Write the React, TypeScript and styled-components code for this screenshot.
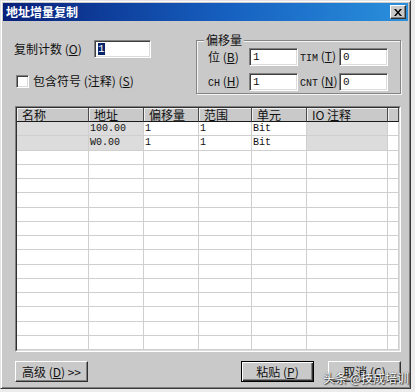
import styled, { createGlobalStyle } from "styled-components";

const GlobalStyle = createGlobalStyle`
  body {
    margin: 0;
    background: #ececec;
    font-family: "Noto Sans CJK SC", "Liberation Sans", sans-serif;
    font-size: 12px;
    color: #111;
  }
`;

const FACE = "#c9c9c9";

const Window = styled.div`
  position: relative;
  box-sizing: border-box;
  width: 411px;
  height: 389px;
  padding: 2px;
  background: ${FACE};
  border: 1px solid;
  border-color: #e4e4e4 #3a3a3a #3a3a3a #e4e4e4;
  box-shadow: inset 1px 1px #fff, inset -1px -1px #808080;
  display: flex;
  flex-direction: column;
`;

const TitleBar = styled.div`
  height: 18px;
  display: flex;
  align-items: center;
  justify-content: space-between;
  padding: 0 2px 0 3px;
  background: linear-gradient(90deg, #08207a 0%, #1660c0 55%, #2a90dc 100%);
  color: #fff;
  font-weight: bold;
  line-height: 14px;
`;

const CloseBtn = styled.div`
  box-sizing: border-box;
  width: 16px;
  height: 14px;
  background: ${FACE};
  border: 1px solid;
  border-color: #fff #303030 #303030 #fff;
  box-shadow: inset -1px -1px #808080;
  display: flex;
  align-items: center;
  justify-content: center;
`;

const Top = styled.div`
  display: flex;
  align-items: flex-start;
  padding: 12px 7px 0 11px;
`;

const LeftBlock = styled.div`
  padding-top: 7px;
`;

const CountRow = styled.div`
  display: flex;
  align-items: center;
  height: 18px;
`;

const Label = styled.span<{ $w?: number; $pl?: number }>`
  display: inline-block;
  width: ${(p) => (p.$w ? `${p.$w}px` : "auto")};
  padding-left: ${(p) => p.$pl ?? 0}px;
  box-sizing: border-box;
  line-height: 14px;
  white-space: nowrap;
`;

const Key = styled.u`
  text-underline-offset: 1px;
`;

const Mono = styled.span`
  font-family: "Liberation Mono", "DejaVu Sans Mono", monospace;
  font-size: 10px;
`;

const Field = styled.div<{ $w: number }>`
  box-sizing: border-box;
  width: ${(p) => p.$w}px;
  height: 18px;
  background: #fff;
  border: 1px solid;
  border-color: #808080 #fff #fff #808080;
  box-shadow: inset 1px 1px #404040, inset -1px -1px #dcdcdc;
  padding: 2px 0 0 3px;
  font-family: "Liberation Mono", monospace;
  font-size: 11px;
  line-height: 13px;
`;

const Selected = styled.span`
  background: #0a246a;
  color: #fff;
`;

const CheckRow = styled.label`
  display: flex;
  align-items: center;
  gap: 4px;
  margin-top: 16px;
  padding-left: 2px;
`;

const CheckBox = styled.span`
  box-sizing: border-box;
  width: 13px;
  height: 13px;
  background: #fff;
  border: 1px solid;
  border-color: #808080 #fff #fff #808080;
  box-shadow: inset 1px 1px #404040, inset -1px -1px #dcdcdc;
`;

const GroupBox = styled.fieldset`
  margin: 0 0 0 auto;
  box-sizing: border-box;
  width: 205px;
  padding: 1px 12px 2px 11px;
  border: 1px solid #858585;
  box-shadow: 1px 1px #f4f4f4, inset 1px 1px #f4f4f4;
  display: grid;
  grid-template-columns: 41px 49px 41px 49px;
  grid-auto-rows: 18px;
  row-gap: 7px;
  align-items: center;
`;

const Legend = styled.legend`
  margin-left: -4px;
  padding: 0 2px;
  line-height: 14px;
  background: ${FACE};
`;

const TableFrame = styled.div`
  margin: 12px 7px 0 12px;
  border: 1px solid;
  border-color: #808080 #fff #fff #808080;
`;

const TableInner = styled.div`
  border: 1px solid;
  border-color: #303030 #dcdcdc #dcdcdc #303030;
  background: #fff;
`;

const COLS = "72px 55px 55px 53px 55px 81px 1fr";

const HeaderRow = styled.div`
  display: grid;
  grid-template-columns: ${COLS};
  height: 14px;
`;

const HeadCell = styled.div`
  box-sizing: border-box;
  height: 14px;
  background: ${FACE};
  border-right: 1px solid #4a4a4a;
  border-bottom: 1px solid #1a1a1a;
  box-shadow: inset 1px 1px #f0f0f0;
  padding-left: 5px;
  font-size: 12px;
  line-height: 13px;
  white-space: nowrap;
`;

const Body = styled.div`
  display: grid;
  grid-template-columns: ${COLS};
  grid-template-rows: repeat(16, 1fr);
  height: 228px;
  overflow: hidden;
`;

const Cell = styled.div<{ $shade?: boolean }>`
  box-sizing: border-box;
  background: ${(p) => (p.$shade ? "#dcdcdc" : "#fff")};
  border-right: 1px solid #cfcfcf;
  border-bottom: 1px solid #cfcfcf;
  padding-left: 1px;
  font-family: "Liberation Mono", monospace;
  font-size: 10px;
  line-height: 13px;
  white-space: nowrap;
  overflow: hidden;
`;

const ButtonRow = styled.div`
  display: flex;
  gap: 14px;
  margin: 9px 7px 0 12px;
`;

const Button = styled.div<{ $primary?: boolean; $push?: boolean }>`
  box-sizing: border-box;
  width: 73px;
  height: 21px;
  margin-left: ${(p) => (p.$push ? "auto" : "0")};
  background: ${FACE};
  border: 1px solid;
  border-color: ${(p) => (p.$primary ? "#000" : "#fff #303030 #303030 #fff")};
  box-shadow: ${(p) =>
    p.$primary
      ? "inset 1px 1px #fff, inset -1px -1px #303030, inset -2px -2px #808080"
      : "inset -1px -1px #808080"};
  display: flex;
  align-items: center;
  justify-content: center;
  line-height: 14px;
  white-space: nowrap;
`;

const Watermark = styled.div`
  position: absolute;
  right: 1px;
  bottom: 3px;
  color: #fff;
  font-size: 12px;
  line-height: 14px;
  text-shadow: 0 0 1px #222, 1px 1px 1px #333;
  pointer-events: none;
`;

type Row = { cells: string[]; shade: boolean[] };

const rows: Row[] = [
  {
    cells: ["", "100.00", "1", "1", "Bit", "", ""],
    shade: [true, true, false, false, false, true, false],
  },
  {
    cells: ["", "W0.00", "1", "1", "Bit", "", ""],
    shade: [true, true, false, false, false, true, false],
  },
];

const headers = ["名称", "地址", "偏移量", "范围", "单元", "IO 注释", ""];

export default function App() {
  const blank: Row = { cells: Array(7).fill(""), shade: Array(7).fill(false) };
  const allRows = [...rows, ...Array(14).fill(blank)];

  return (
    <>
      <GlobalStyle />
      <Window>
        <TitleBar>
          <span>地址增量复制</span>
          <CloseBtn>
            <svg width="8" height="7" viewBox="0 0 8 7">
              <path d="M0 0h2l2 2.5L6 0h2L5 3.5 8 7H6L4 4.5 2 7H0l3-3.5z" fill="#000" />
            </svg>
          </CloseBtn>
        </TitleBar>

        <Top>
          <LeftBlock>
            <CountRow>
              <Label $w={80}>
                复制计数 (<Key>O</Key>)
              </Label>
              <Field $w={57}>
                <Selected>1</Selected>
              </Field>
            </CountRow>
            <CheckRow>
              <CheckBox />
              <Label>
                包含符号 (注释) (<Key>S</Key>)
              </Label>
            </CheckRow>
          </LeftBlock>

          <GroupBox>
            <Legend>偏移量</Legend>
            <Label>
              位 (<Key>B</Key>)
            </Label>
            <Field $w={49}>1</Field>
            <Label $pl={2}>
              <Mono>TIM</Mono> (<Key>T</Key>)
            </Label>
            <Field $w={49}>0</Field>
            <Label>
              <Mono>CH</Mono> (<Key>H</Key>)
            </Label>
            <Field $w={49}>1</Field>
            <Label $pl={2}>
              <Mono>CNT</Mono> (<Key>N</Key>)
            </Label>
            <Field $w={49}>0</Field>
          </GroupBox>
        </Top>

        <TableFrame>
          <TableInner>
            <HeaderRow>
              {headers.map((h, i) => (
                <HeadCell key={i}>{h}</HeadCell>
              ))}
            </HeaderRow>
            <Body>
              {allRows.map((r, ri) =>
                r.cells.map((c, ci) => (
                  <Cell key={`${ri}-${ci}`} $shade={r.shade[ci]}>
                    {c}
                  </Cell>
                ))
              )}
            </Body>
          </TableInner>
        </TableFrame>

        <ButtonRow>
          <Button>
            高级 (<Key>D</Key>) &gt;&gt;
          </Button>
          <Button $primary $push>
            粘贴 (<Key>P</Key>)
          </Button>
          <Button>
            取消 (<Key>C</Key>)
          </Button>
        </ButtonRow>

        <Watermark>头条 @技成培训</Watermark>
      </Window>
    </>
  );
}
